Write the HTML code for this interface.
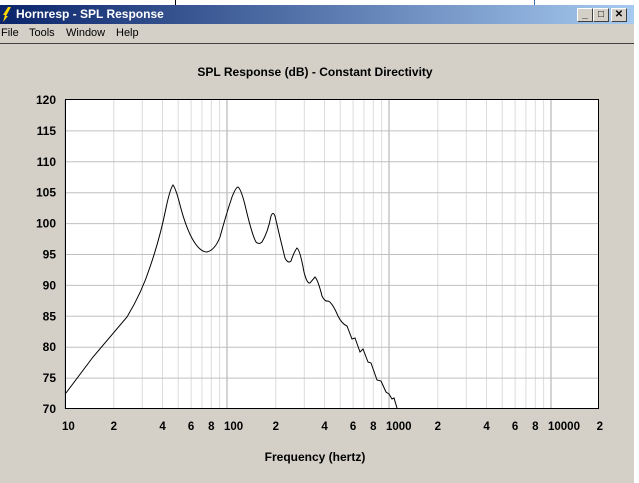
<!DOCTYPE html>
<html><head><style>
body{margin:0;width:639px;height:483px;overflow:hidden;background:#fff;font-family:"Liberation Sans",sans-serif;position:relative}
.win{position:absolute;left:0;top:5px;width:634px;height:478px;background:#d4d0c8}
.title{position:absolute;left:0;top:0;width:634px;height:19px;background:linear-gradient(90deg,#0a246a,#a6caf0);color:#fff;font-weight:bold;font-size:12px;line-height:19px}
.title span{position:absolute;left:16px}
.menu{position:absolute;top:19px;left:0;width:634px;height:19px;font-size:11px;line-height:19px;border-bottom:1px solid #404040}
.menu span{position:absolute;top:0}
.btn{position:absolute;top:3px;width:14px;height:12px;background:#d4d0c8;border:1px solid;border-color:#fff #404040 #404040 #fff;font-size:10px;line-height:12px;text-align:center;color:#000;font-weight:bold}
</style></head><body>
<div style="position:absolute;left:175px;top:0;width:1px;height:5px;background:#000"></div>
<div style="position:absolute;left:534px;top:0;width:1px;height:5px;background:#3a6ea5"></div>
<div class="win">
<div class="title"><svg style="position:absolute;left:2px;top:2px" width="10" height="15"><path d="M6 0 L9 0 L4 9 L6 9 L1 15 L3 8 L1 8 Z" fill="#ffd800"/></svg><span>Hornresp - SPL Response</span>
<div class="btn" style="left:577px">_</div><div class="btn" style="left:593px">□</div><div class="btn" style="left:611px">✕</div></div>
<div class="menu"><span style="left:1px">File</span><span style="left:29px">Tools</span><span style="left:66px">Window</span><span style="left:116px">Help</span></div>
</div>
<svg id="g" style="position:absolute;left:0;top:0" width="639" height="483" font-family="Liberation Sans, sans-serif"></svg>
<script>
var s='';var d=[65,227,389,551];
s+='<rect x="65" y="100" width="533" height="309" fill="#fff"/>';
for(var i=0;i<4;i++){for(var n=1;n<=9;n++){var x=d[i]+162*Math.log10(n);if(x>598)break;s+='<line x1="'+x.toFixed(1)+'" y1="100" x2="'+x.toFixed(1)+'" y2="409" stroke="'+(n==1?'#a8a8a8':'#dcdcdc')+'"/>';}}
for(var k=1;k<10;k++){var y=100+30.9*k;s+='<line x1="65" y1="'+y+'" x2="598" y2="'+y+'" stroke="#c0c0c0"/>';}
for(var k=0;k<=10;k++){var y=100+30.9*k;s+='<text x="56" y="'+(y+4)+'" font-size="12" font-weight="bold" text-anchor="end">'+(120-5*k)+'</text>';}
var lab=[[1,'10'],[2,'2'],[4,'4'],[6,'6'],[8,'8']];
for(var i=0;i<4;i++){for(var j=0;j<lab.length;j++){var n=lab[j][0];var x=d[i]+162*Math.log10(n);if(x>601)break;var t=n==1?(i==0?'10':i==1?'100':i==2?'1000':'10000'):lab[j][1];
if(i==3&&n>2)continue;
s+='<text x="'+(n==1?x-3:x)+'" y="430" font-size="11.5" font-weight="bold" text-anchor="'+(n==1?'start':'middle')+'">'+t+'</text>';}}
s+='<rect x="65.5" y="99.5" width="533" height="309" fill="none" stroke="#000"/>';
s+='<path d="M66,393 L93,357 L127,317 Q142,292 150,267 Q160,238 166,208 Q170,189 173,185 Q176,189 180,205 Q186,228 193,240 Q200,252 207,252 Q215,250 220,237 Q226,215 232,197 Q236,187 238,187 Q241,189 245,205 Q252,235 256,242 Q259,245 262,242 Q268,232 271,216 Q273,211 275,216 Q280,238 285,258 Q288,264 291,261 Q294,252 297,248 Q300,250 304,272 Q307,284 310,283 L315,277 Q318,280 322,296 Q325,302 328,301 Q332,302 338,316 Q342,324 347,326 L352,339 L355,338 L360,352 L363,349 L368,362 L371,363 L377,380 L381,381 L386,392 L389,394 L392,399 L394,398 L397,408" fill="none" stroke="#000"/>';
s+='<text x="315" y="76" font-size="12" font-weight="bold" text-anchor="middle">SPL Response (dB) - Constant Directivity</text>';
s+='<text x="315" y="461" font-size="12" font-weight="bold" text-anchor="middle">Frequency (hertz)</text>';
document.getElementById('g').innerHTML=s;
</script>
</body></html>
